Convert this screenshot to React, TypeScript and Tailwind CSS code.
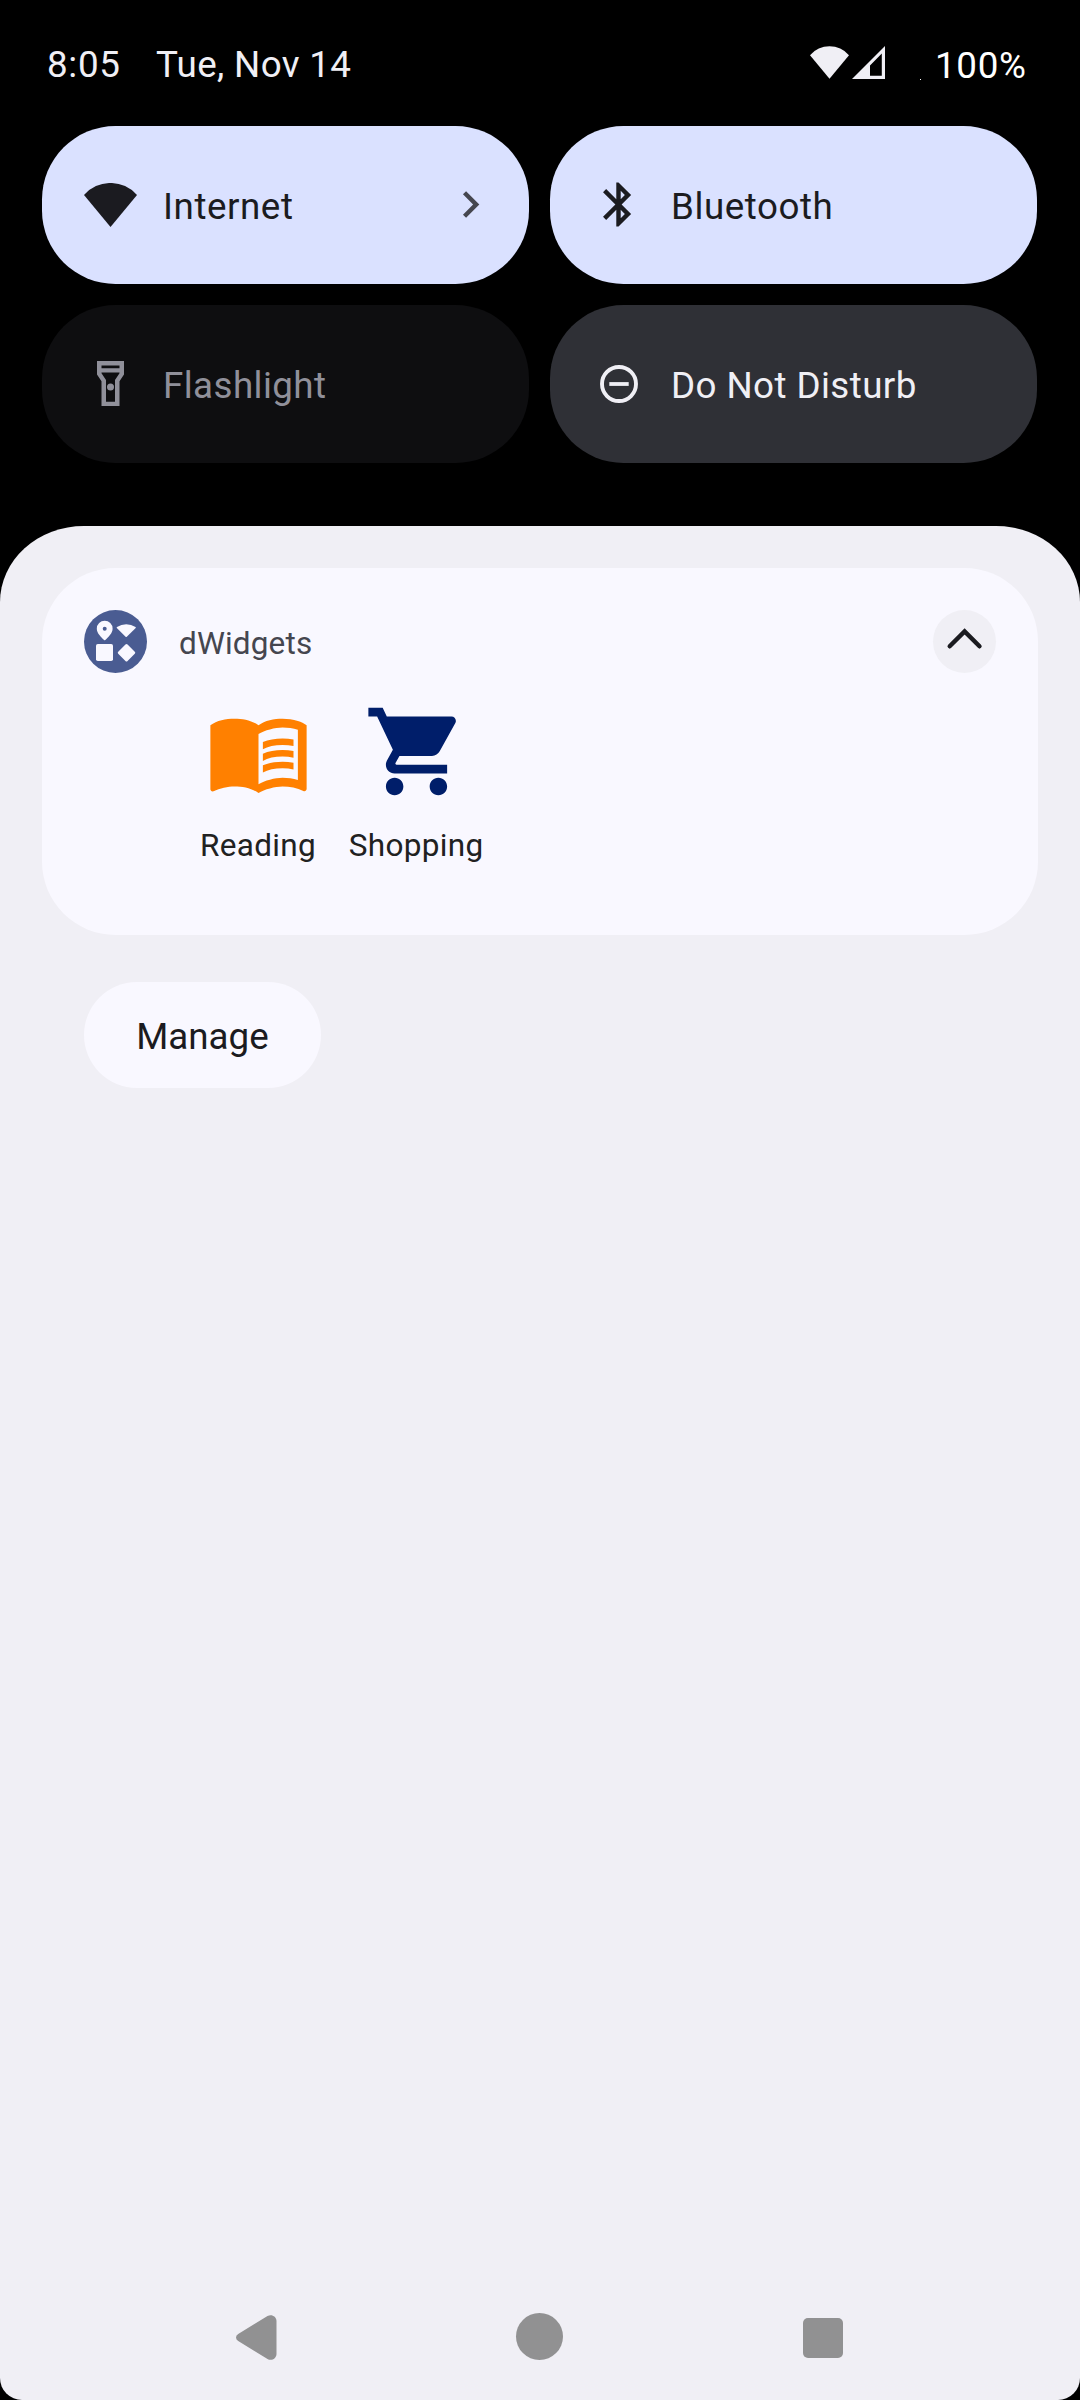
import React from "react";

function WifiFan({ className }: { className: string }) {
  return (
    <svg viewBox="0 0 53 44" className={className} fill="currentColor">
      <path d="M26.5 44 0 12A35.2 35.2 0 0 1 53 12Z" />
    </svg>
  );
}

function CellSignal() {
  return (
    <svg viewBox="0 0 33 33" className="ml-[3px] h-[33px] w-[33px]" fill="currentColor">
      <path fillRule="evenodd" d="M0 33 33 0V33ZM18 29.7H29.8V7.6L18 19.4Z" />
    </svg>
  );
}

function BluetoothIcon() {
  return (
    <svg viewBox="0 0 24 24" className="h-[53px] w-[53px]" fill="currentColor">
      <path d="M17.71 7.71L12 2h-1v7.59L6.41 5 5 6.41 10.59 12 5 17.59 6.41 19 11 14.41V22h1l5.71-5.71-4.3-4.29 4.3-4.29zM13 5.83l1.88 1.88L13 9.59V5.83zm1.88 10.46L13 18.17v-3.76l1.88 1.88z" />
    </svg>
  );
}

function FlashlightIcon() {
  return (
    <svg viewBox="0 0 27 45" className="h-[45px] w-[27px]" fill="currentColor">
      <path
        fillRule="evenodd"
        d="M0 0H27V13.5L22.5 20.2V45H4.5V20.2L0 13.5ZM4.5 4.5V7.3H22.5V4.5ZM4.5 11.6V12.2L9 18.9V40.7H18V18.9L22.5 12.2V11.6Z"
      />
      <circle cx="13.5" cy="26" r="3.5" />
    </svg>
  );
}

function DndIcon() {
  return (
    <svg viewBox="0 0 38 38" className="h-[38px] w-[38px]" fill="none" stroke="currentColor">
      <circle cx="19" cy="19" r="17" strokeWidth="3.9" />
      <path d="M9.3 19H28.7" strokeWidth="3.8" />
    </svg>
  );
}

function Tile({
  icon,
  label,
  tone,
  spacing,
  chevron,
}: {
  icon: React.ReactNode;
  label: string;
  tone: string;
  spacing: string;
  chevron?: boolean;
}) {
  return (
    <div className={`flex h-[158px] items-center rounded-[73.5px] pl-[42px] pr-8 ${tone}`}>
      <span className="-mt-px flex w-[53px] justify-center">{icon}</span>
      <span className={`ml-[26px] flex-1 pt-[3px] text-[36.75px] leading-[44px] ${spacing}`}>{label}</span>
      {chevron && (
        <svg viewBox="0 0 24 24" className="-mt-px h-[53px] w-[53px] text-[#45464f]" fill="currentColor">
          <path d="M10 6 8.59 7.41 13.17 12l-4.58 4.59L10 18l6-6z" />
        </svg>
      )}
    </div>
  );
}

function AppBadge() {
  return (
    <svg viewBox="0 0 63 63" className="h-[63px] w-[63px]">
      <circle cx="31.5" cy="31.5" r="31.5" fill="#4a5c92" />
      <g fill="#f9f8ff">
        <path
          fillRule="evenodd"
          d="M20.7 10.8a7.9 7.9 0 0 0-7.9 7.9c0 4.7 4.6 8.4 7.3 11.3q.6.6 1.2 0c2.7-2.9 7.3-6.6 7.3-11.3a7.9 7.9 0 0 0-7.9-7.9ZM20.7 16.7a2 2 0 1 1 0 4 2 2 0 0 1 0-4Z"
        />
        <path d="M32.8 18q-.4-.5.2-.9a16.8 16.8 0 0 1 18.5 0q.6.4.2.9L42.8 26.7q-.6.5-1.2 0Z" />
        <rect x="12" y="34" width="17" height="17" rx="1.8" />
        <rect x="35.9" y="36.1" width="13.2" height="13.2" rx="1.5" transform="rotate(45 42.5 42.7)" />
      </g>
    </svg>
  );
}

function Shortcut({ label, icon, spacing }: { label: string; icon: React.ReactNode; spacing: string }) {
  return (
    <div className="flex w-[157.5px] flex-col items-center text-[#212121]">
      {icon}
      <span className={`mt-[23px] text-[31.5px] leading-[38px] ${spacing}`}>{label}</span>
    </div>
  );
}

export default function App() {
  return (
    <div className="flex h-[2400px] w-[1080px] flex-col overflow-hidden bg-black font-[Roboto,sans-serif] text-[#f0eff5]">
      <header className="flex h-[126px] items-start pl-[47px] pr-[54px] pt-[43px] text-[36.75px] leading-[44px]">
        <span className="w-[109px] tracking-[0.7px]">8:05</span>
        <span className="tracking-[0.35px]">Tue, Nov 14</span>
        <div className="ml-auto flex items-start">
          <div className="flex pt-[3px]">
            <WifiFan className="h-[33px] w-[39px]" />
            <CellSignal />
          </div>
          <i className="ml-[35px] mt-[36px] h-px w-px bg-white" />
          <span className="ml-[14px] w-[91px] whitespace-nowrap pt-px tracking-[0.7px] text-white">100%</span>
        </div>
      </header>

      <section className="grid grid-cols-2 gap-[21px] pl-[42px] pr-[43px]">
        <Tile
          icon={<WifiFan className="h-[44px] w-[53px]" />}
          label="Internet"
          spacing="tracking-[0.55px]"
          tone="bg-[#dae1ff] text-[#1b1b20]"
          chevron
        />
        <Tile icon={<BluetoothIcon />} label="Bluetooth" spacing="tracking-[0.55px]" tone="bg-[#dae1ff] text-[#1b1b20]" />
        <Tile icon={<FlashlightIcon />} label="Flashlight" spacing="tracking-[0.42px]" tone="bg-[#0e0e10] text-[#90909a]" />
        <Tile icon={<DndIcon />} label="Do Not Disturb" spacing="tracking-[0.42px]" tone="bg-[#2f3036] text-[#f0eff5]" />
      </section>

      <main className="mt-[63px] flex flex-1 flex-col rounded-[84px_84px_22px_22px/76px_76px_22px_22px] bg-[#f0eff5] px-[42px] pt-[42px]">
        <article className="h-[367px] rounded-[73.5px] bg-[#f9f8ff] pt-[42px]">
          <div className="flex items-center px-[42px]">
            <AppBadge />
            <span className="ml-[32px] pt-[4px] text-[31.5px] leading-[38px] tracking-[0.15px] text-[#45464f]">dWidgets</span>
            <button className="ml-auto flex h-[63px] w-[63px] items-center justify-center rounded-full bg-[#f0eff5]">
              <svg viewBox="0 0 63 63" className="h-[63px] w-[63px]" fill="none" stroke="#1b1b20">
                <path d="M16.7 36.3 31.6 21.4 46.5 36.3" strokeWidth="4.4" strokeLinecap="round" />
              </svg>
            </button>
          </div>
          <div className="mt-[26px] flex gap-[0.6px] pl-[137.3px]">
            <Shortcut
              label="Reading"
              spacing="tracking-[0.3px]"
              icon={
                <svg viewBox="0 0 24 24" className="h-[105px] w-[105px]" fill="#ff8000">
                  <path d="M21 5c-1.11-.35-2.33-.5-3.5-.5-1.95 0-4.05.4-5.5 1.5-1.45-1.1-3.55-1.5-5.5-1.5S2.45 4.9 1 6v14.65c0 .25.25.5.5.5.1 0 .15-.05.25-.05C3.1 20.45 5.05 20 6.5 20c1.95 0 4.05.4 5.5 1.5 1.35-.85 3.8-1.5 5.5-1.5 1.65 0 3.35.3 4.75 1.05.1.05.15.05.25.05.25 0 .5-.25.5-.5V6c-.6-.45-1.25-.75-2-1zm0 13.5c-1.1-.35-2.3-.5-3.5-.5-1.7 0-4.15.65-5.5 1.5V8c1.35-.85 3.8-1.5 5.5-1.5 1.2 0 2.4.15 3.5.5v11.5z" />
                  <path d="M17.5 10.5c.88 0 1.73.09 2.5.26V9.24c-.79-.15-1.64-.24-2.5-.24-1.7 0-3.24.29-4.5.83v1.66c1.13-.64 2.7-.99 4.5-.99zM13 12.49v1.66c1.13-.64 2.7-.99 4.5-.99.88 0 1.73.09 2.5.26V11.9c-.79-.15-1.64-.24-2.5-.24-1.7 0-3.24.3-4.5.83zM17.5 14.33c-1.7 0-3.24.29-4.5.83v1.66c1.13-.64 2.7-.99 4.5-.99.88 0 1.73.09 2.5.26v-1.52c-.79-.16-1.64-.24-2.5-.24z" />
                </svg>
              }
            />
            <Shortcut
              label="Shopping"
              spacing="tracking-[0.35px]"
              icon={
                <svg viewBox="0 0 24 24" className="h-[105px] w-[105px]" fill="#001e6a">
                  <path d="M7 18c-1.1 0-1.99.9-1.99 2S5.9 22 7 22s2-.9 2-2-.9-2-2-2zM1 2v2h2l3.6 7.59-1.35 2.45c-.16.28-.25.61-.25.96 0 1.1.9 2 2 2h12v-2H7.42c-.14 0-.25-.11-.25-.25l.03-.12.9-1.63h7.45c.75 0 1.41-.41 1.75-1.03l3.58-6.49c.08-.14.12-.31.12-.48 0-.55-.45-1-1-1H5.21l-.94-2H1zm16 16c-1.1 0-1.99.9-1.99 2s.89 2 1.99 2 2-.9 2-2-.9-2-2-2z" />
                </svg>
              }
            />
          </div>
        </article>

        <button className="ml-[42px] mt-[47px] flex h-[106px] w-[237px] items-center justify-center rounded-full bg-[#f9f8ff] pt-[3px] text-[36.75px] leading-[44px] text-[#1b1b20]">
          Manage
        </button>

        <nav className="mb-[40px] ml-[73px] mt-auto flex w-[849px] items-center text-[#919192]">
          <span className="flex w-[283px] justify-center">
            <svg viewBox="0 0 41 45" className="mt-[2px] h-[45px] w-[41px]" fill="currentColor">
              <path d="M2.2 19 31.5 1C35.5-1.3 40.5 1.4 40.5 6V39C40.5 43.6 35.5 46.3 31.5 44L2.2 26Q0 24.7 0 22.5T2.2 19Z" />
            </svg>
          </span>
          <span className="flex w-[283px] justify-center">
            <i className="h-[46.5px] w-[46.5px] rounded-full bg-current" />
          </span>
          <span className="flex w-[283px] justify-center">
            <i className="mt-[2px] h-[40px] w-[40px] rounded-[5px] bg-current" />
          </span>
        </nav>
      </main>
    </div>
  );
}
